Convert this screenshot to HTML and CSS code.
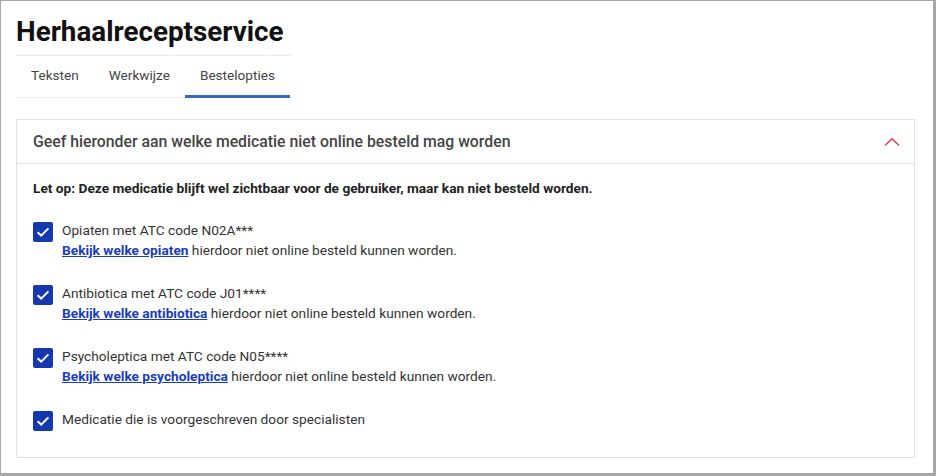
FILE: index.html
```html
<!DOCTYPE html>
<html lang="nl">
<head>
<meta charset="utf-8">
<title>Herhaalreceptservice</title>
<link rel="stylesheet" href="styles.css">
</head>
<body>
<div class="frame">
  <h1 class="title">Herhaalreceptservice</h1>
  <nav class="tabs">
    <a class="tab">Teksten</a>
    <a class="tab">Werkwijze</a>
    <a class="tab active">Bestelopties</a>
  </nav>
  <section class="card">
    <header class="card-head">
      <h2 class="card-title">Geef hieronder aan welke medicatie niet online besteld mag worden</h2>
      <svg class="chev" width="16" height="10" viewBox="0 0 16 10"><path d="M1 8.5 L8 1.8 L15 8.5" fill="none" stroke="#ea3a3f" stroke-width="1.4"/></svg>
    </header>
    <div class="card-body">
      <p class="note">Let op: Deze medicatie blijft wel zichtbaar voor de gebruiker, maar kan niet besteld worden.</p>
      <ul class="opts">
        <li class="opt">
          <span class="cb"><svg width="16" height="16" viewBox="0 0 16 16"><path d="M2.6 8.2 L6.2 11.6 L13.4 4.4" fill="none" stroke="#fff" stroke-width="2"/></svg></span>
          <div class="opt-text">
            <div>Opiaten met ATC code N02A***</div>
            <div><a class="lnk">Bekijk welke opiaten</a> hierdoor niet online besteld kunnen worden.</div>
          </div>
        </li>
        <li class="opt">
          <span class="cb"><svg width="16" height="16" viewBox="0 0 16 16"><path d="M2.6 8.2 L6.2 11.6 L13.4 4.4" fill="none" stroke="#fff" stroke-width="2"/></svg></span>
          <div class="opt-text">
            <div>Antibiotica met ATC code J01****</div>
            <div><a class="lnk">Bekijk welke antibiotica</a> hierdoor niet online besteld kunnen worden.</div>
          </div>
        </li>
        <li class="opt">
          <span class="cb"><svg width="16" height="16" viewBox="0 0 16 16"><path d="M2.6 8.2 L6.2 11.6 L13.4 4.4" fill="none" stroke="#fff" stroke-width="2"/></svg></span>
          <div class="opt-text">
            <div>Psycholeptica met ATC code N05****</div>
            <div><a class="lnk">Bekijk welke psycholeptica</a> hierdoor niet online besteld kunnen worden.</div>
          </div>
        </li>
        <li class="opt">
          <span class="cb"><svg width="16" height="16" viewBox="0 0 16 16"><path d="M2.6 8.2 L6.2 11.6 L13.4 4.4" fill="none" stroke="#fff" stroke-width="2"/></svg></span>
          <div class="opt-text">
            <div>Medicatie die is voorgeschreven door specialisten</div>
          </div>
        </li>
      </ul>
    </div>
  </section>
</div>
</body>
</html>
```
FILE: styles.css
```css
* { box-sizing: border-box; }
html, body { margin: 0; padding: 0; }
body {
  width: 936px;
  height: 476px;
  font-family: Roboto, "Liberation Sans", sans-serif;
  background: #fff;
  color: #333;
}
.frame {
  width: 936px;
  height: 476px;
  border-top: 1px solid #a6a6a6;
  border-left: 1px solid #a6a6a6;
  border-right: 3px solid #a6a6a6;
  border-bottom: 3px solid #a6a6a6;
  padding: 0 18px 0 15px;
}
.title {
  margin: 0;
  padding-top: 14px;
  height: 55px;
  font-size: 27.8px;
  font-weight: 700;
  color: #111;
  line-height: 33px;
  width: 275px;
  border-bottom: 1px solid #ececec;
}
.tabs {
  display: flex;
  width: 275px;
  height: 42px;
  border-bottom: 1px solid #ececec;
}
.tab {
  padding: 0 15px;
  font-size: 13.6px;
  line-height: 39px;
  color: #444;
  border-bottom: 3px solid transparent;
  margin-bottom: -1px;
}
.tab.active { border-bottom-color: #2f6db5; }
.card {
  margin-top: 21px;
  border: 1px solid #e2e2e2;
  height: 339px;
}
.card-head {
  display: flex;
  align-items: center;
  justify-content: space-between;
  height: 44px;
  padding: 0 14px 0 16px;
  border-bottom: 1px solid #e2e2e2;
}
.card-title {
  margin: 0;
  font-size: 15.8px;
  font-weight: 500;
  color: #444;
}
.chev { display: block; }
.card-body { padding: 16px 16px; }
.note {
  margin: 0 0 24px;
  font-size: 13.7px;
  font-weight: 700;
  color: #222;
}
.opts { list-style: none; margin: 0; padding: 0; }
.opt {
  display: flex;
  gap: 9px;
  height: 63px;
}
.cb {
  flex: none;
  width: 20px;
  height: 20px;
  border-radius: 2px;
  background: #1538b0;
  display: flex;
  align-items: center;
  justify-content: center;
  margin-top: 2px;
}
.opt-text {
  font-size: 13.7px;
  line-height: 20px;
  color: #333;
}
.lnk {
  color: #1a3cc0;
  font-weight: 700;
  text-decoration: underline;
}
```
